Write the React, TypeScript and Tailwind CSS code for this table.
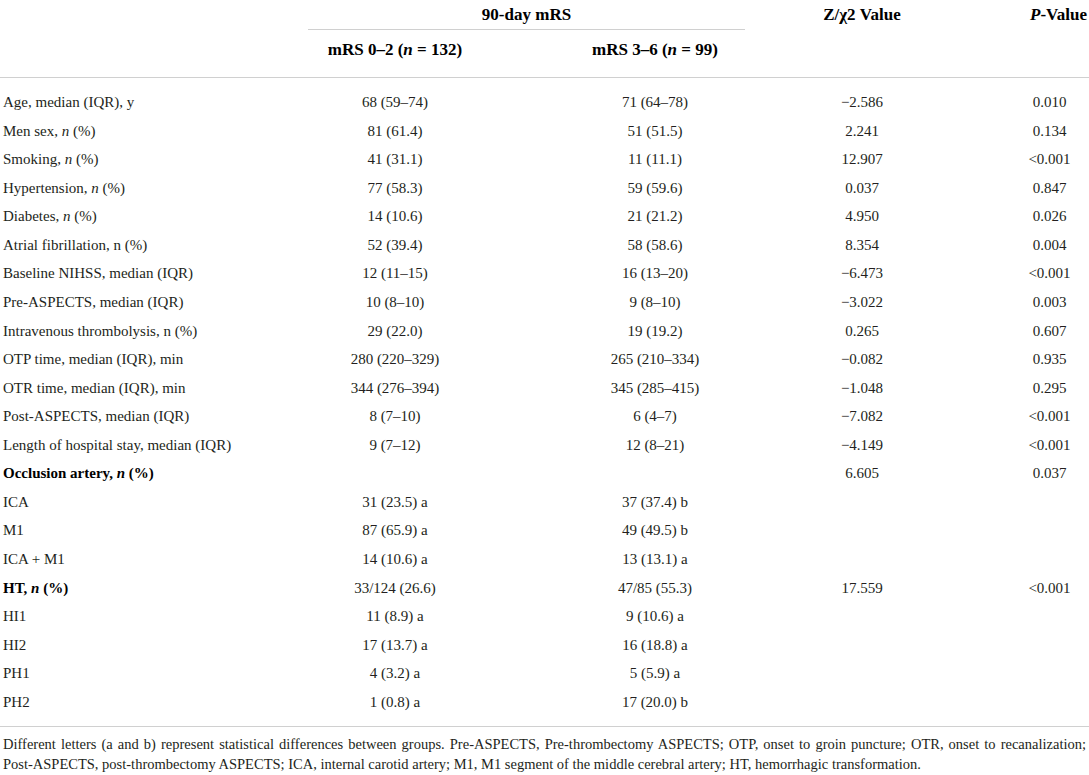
import type { ReactNode } from "react";

type Row = {
  label: ReactNode;
  bold?: boolean;
  g1?: string;
  g2?: string;
  z?: string;
  p?: string;
};

const N = () => <i>n</i>;

const ROWS: Row[] = [
  { label: "Age, median (IQR), y", g1: "68 (59–74)", g2: "71 (64–78)", z: "−2.586", p: "0.010" },
  { label: <>Men sex, <N /> (%)</>, g1: "81 (61.4)", g2: "51 (51.5)", z: "2.241", p: "0.134" },
  { label: <>Smoking, <N /> (%)</>, g1: "41 (31.1)", g2: "11 (11.1)", z: "12.907", p: "<0.001" },
  { label: <>Hypertension, <N /> (%)</>, g1: "77 (58.3)", g2: "59 (59.6)", z: "0.037", p: "0.847" },
  { label: <>Diabetes, <N /> (%)</>, g1: "14 (10.6)", g2: "21 (21.2)", z: "4.950", p: "0.026" },
  { label: "Atrial fibrillation, n (%)", g1: "52 (39.4)", g2: "58 (58.6)", z: "8.354", p: "0.004" },
  { label: "Baseline NIHSS, median (IQR)", g1: "12 (11–15)", g2: "16 (13–20)", z: "−6.473", p: "<0.001" },
  { label: "Pre-ASPECTS, median (IQR)", g1: "10 (8–10)", g2: "9 (8–10)", z: "−3.022", p: "0.003" },
  { label: "Intravenous thrombolysis, n (%)", g1: "29 (22.0)", g2: "19 (19.2)", z: "0.265", p: "0.607" },
  { label: "OTP time, median (IQR), min", g1: "280 (220–329)", g2: "265 (210–334)", z: "−0.082", p: "0.935" },
  { label: "OTR time, median (IQR), min", g1: "344 (276–394)", g2: "345 (285–415)", z: "−1.048", p: "0.295" },
  { label: "Post-ASPECTS, median (IQR)", g1: "8 (7–10)", g2: "6 (4–7)", z: "−7.082", p: "<0.001" },
  { label: "Length of hospital stay, median (IQR)", g1: "9 (7–12)", g2: "12 (8–21)", z: "−4.149", p: "<0.001" },
  { label: <>Occlusion artery, <N /> (%)</>, bold: true, z: "6.605", p: "0.037" },
  { label: "ICA", g1: "31 (23.5) a", g2: "37 (37.4) b" },
  { label: "M1", g1: "87 (65.9) a", g2: "49 (49.5) b" },
  { label: "ICA + M1", g1: "14 (10.6) a", g2: "13 (13.1) a" },
  { label: <>HT, <N /> (%)</>, bold: true, g1: "33/124 (26.6)", g2: "47/85 (55.3)", z: "17.559", p: "<0.001" },
  { label: "HI1", g1: "11 (8.9) a", g2: "9 (10.6) a" },
  { label: "HI2", g1: "17 (13.7) a", g2: "16 (18.8) a" },
  { label: "PH1", g1: "4 (3.2) a", g2: "5 (5.9) a" },
  { label: "PH2", g1: "1 (0.8) a", g2: "17 (20.0) b" },
];

// label | mRS 0-2 | mRS 3-6 | Z | gap | P
const COLS = "grid grid-cols-[300px_190px_330px_84px_106px_79px]";

export default function App() {
  return (
    <div className="w-[1089px] h-[775px] overflow-hidden bg-white text-[#231f20] font-['Liberation_Serif',serif]">
      {/* header */}
      <div className={`${COLS} text-[17px] font-bold text-black`}>
        <div />
        <div className="col-span-2 flex flex-col">
          <div className="h-[29px] flex items-center justify-center pl-[8px] pr-[75px]">90-day mRS</div>
          <div className="ml-[8px] mr-[75px] border-t border-[#d0d0d0]" />
          <div className="h-[47px] grid grid-cols-[190px_330px] pb-[7px]">
            <div className="flex items-center justify-center whitespace-nowrap">
              mRS 0–2 (<i>n</i>&nbsp;=&nbsp;132)
            </div>
            <div className="flex items-center justify-center whitespace-nowrap">
              mRS 3–6 (<i>n</i>&nbsp;=&nbsp;99)
            </div>
          </div>
        </div>
        <div className="h-[29px] flex items-center justify-center whitespace-nowrap">Z/χ2 Value</div>
        <div />
        <div className="h-[29px] flex items-center justify-end pr-[2px] whitespace-nowrap">
          <i>P</i>-Value
        </div>
      </div>

      <div className="border-t border-[#d0d0d0]" />

      {/* body */}
      <div className="pt-[10px] pb-[10px] text-[15px]">
        {ROWS.map((r, i) => (
          <div key={i} className={`${COLS} h-[28.57px] items-center`}>
            <div className={`pl-[3px] whitespace-nowrap ${r.bold ? "font-bold text-black" : ""}`}>
              {r.label}
            </div>
            <div className="text-center whitespace-nowrap">{r.g1}</div>
            <div className="text-center whitespace-nowrap">{r.g2}</div>
            <div className="text-center whitespace-nowrap">{r.z}</div>
            <div />
            <div className="text-center whitespace-nowrap">{r.p}</div>
          </div>
        ))}
      </div>

      <div className="border-t border-[#d0d0d0]" />

      <div className="px-[3px] pt-[7px] text-[14.5px] leading-[20px]">
        <p className="whitespace-nowrap text-justify [text-align-last:justify]">
          Different letters (a and b) represent statistical differences between groups. Pre-ASPECTS,
          Pre-thrombectomy ASPECTS; OTP, onset to groin puncture; OTR, onset to recanalization;
        </p>
        <p className="whitespace-nowrap">
          Post-ASPECTS, post-thrombectomy ASPECTS; ICA, internal carotid artery; M1, M1 segment of
          the middle cerebral artery; HT, hemorrhagic transformation.
        </p>
      </div>
    </div>
  );
}
